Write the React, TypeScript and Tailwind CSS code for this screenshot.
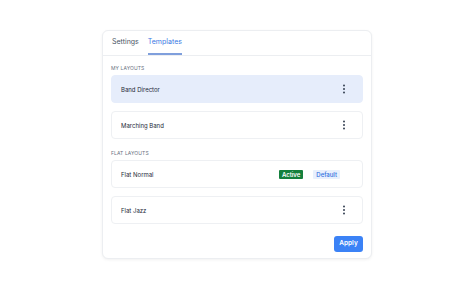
import React from 'react';

type Layout = {
  name: string;
  selected?: boolean;
  active?: boolean;
  isDefault?: boolean;
};

const myLayouts: Layout[] = [
  { name: 'Band Director', selected: true },
  { name: 'Marching Band' },
];

const flatLayouts: Layout[] = [
  { name: 'Flat Normal', active: true, isDefault: true },
  { name: 'Flat Jazz' },
];

function Kebab() {
  return (
    <svg width="6" height="10" viewBox="0 0 6 10" className="text-gray-700">
      <circle cx="3" cy="1.6" r="1" fill="currentColor" />
      <circle cx="3" cy="5" r="1" fill="currentColor" />
      <circle cx="3" cy="8.4" r="1" fill="currentColor" />
    </svg>
  );
}

function LayoutRow({ layout }: { layout: Layout }) {
  return (
    <div
      className={`flex items-center h-[28px] rounded-[4px] border pl-[9px] pr-[15px] ${
        layout.selected ? 'bg-[#e6edfb] border-[#e6edfb]' : 'bg-white border-[#eef0f3]'
      }`}
    >
      <span className="text-[6px] text-gray-800 flex-1">{layout.name}</span>
      {layout.active || layout.isDefault ? (
        <div className="flex items-center gap-[10px] mr-[7px]">
          {layout.active && (
            <span className="bg-[#15803d] text-white text-[6px] font-semibold px-[3px] h-[9px] leading-[9px] rounded-[1px]">
              Active
            </span>
          )}
          {layout.isDefault && (
            <span className="bg-[#e8f0fd] text-[#2f6fe0] text-[6px] font-medium px-[3px] h-[9px] leading-[9px] rounded-[1px]">
              Default
            </span>
          )}
        </div>
      ) : (
        <Kebab />
      )}
    </div>
  );
}

export default function App() {
  return (
    <div
      className="w-[474px] h-[289px] bg-white flex items-center justify-center"
      style={{ fontFamily: 'Inter, "Noto Sans", sans-serif' }}
    >
      <div className="w-[270px] h-[229px] rounded-[6px] border border-[#eceef1] bg-white shadow-[0_1px_3px_rgba(0,0,0,0.06)] flex flex-col">
        {/* Tabs */}
        <div className="h-[25px] border-b border-[#eceef1] flex items-end pl-[9px] gap-[9px]">
          <div className="h-full flex items-center text-[7px] text-gray-600 pb-[1px]">Settings</div>
          <div className="h-full flex items-center text-[7px] text-[#3a78e4] border-b-[2px] border-[#7f9fdc] pt-[1px]">
            Templates
          </div>
        </div>

        <div className="flex-1 flex flex-col px-[8px]">
          <div className="text-[5px] tracking-[0.02em] text-gray-500 mt-[10px] mb-[4px] leading-[5px]">MY LAYOUTS</div>
          <div className="flex flex-col gap-[8px]">
            {myLayouts.map((l) => (
              <LayoutRow key={l.name} layout={l} />
            ))}
          </div>

          <div className="text-[5px] tracking-[0.02em] text-gray-500 mt-[12px] mb-[4px] leading-[5px]">FLAT LAYOUTS</div>
          <div className="flex flex-col gap-[8px]">
            {flatLayouts.map((l) => (
              <LayoutRow key={l.name} layout={l} />
            ))}
          </div>

          <div className="flex justify-end mt-[12px]">
            <button className="bg-[#3b82f6] text-white text-[6.5px] font-semibold w-[29px] h-[16px] rounded-[3px]">
              Apply
            </button>
          </div>
        </div>
      </div>
    </div>
  );
}
